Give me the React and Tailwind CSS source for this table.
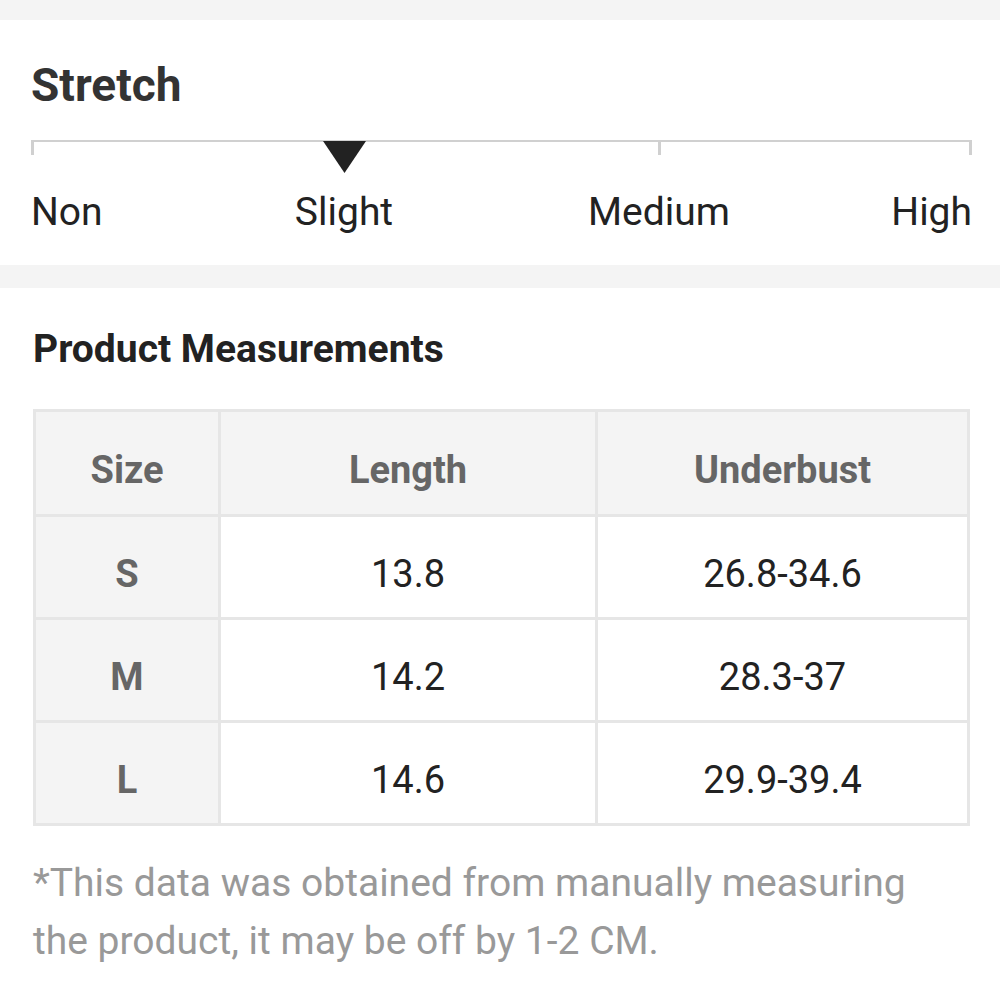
import React from "react";

const rows = [
  { size: "S", length: "13.8", underbust: "26.8-34.6" },
  { size: "M", length: "14.2", underbust: "28.3-37" },
  { size: "L", length: "14.6", underbust: "29.9-39.4" },
];

function StretchScale() {
  return (
    <div className="pl-[31px] pr-[28px]">
      {/* scale line with ticks */}
      <div className="relative h-[46px]">
        <div className="absolute left-0 right-0 top-0 h-[2px] bg-[#d0d0d0]" />
        <div className="absolute left-0 top-0 w-[3px] h-[15px] bg-[#d0d0d0]" />
        <div className="absolute left-[312px] top-0 w-[3px] h-[15px] bg-[#d0d0d0]" />
        <div className="absolute left-[627px] top-0 w-[3px] h-[15px] bg-[#d0d0d0]" />
        <div className="absolute right-0 top-0 w-[3px] h-[15px] bg-[#d0d0d0]" />
        {/* selected marker */}
        <svg
          className="absolute left-[292px] top-[1px]"
          width="43"
          height="32"
          viewBox="0 0 43 32"
        >
          <polygon points="0,0 43,0 21.5,32" fill="#222" />
        </svg>
      </div>
      <div className="relative h-[52px] text-[39px] leading-[52px] text-[#222]">
        <span className="absolute left-0 top-0">Non</span>
        <span className="absolute left-[313px] top-0 -translate-x-1/2">Slight</span>
        <span className="absolute left-[628px] top-0 -translate-x-1/2">Medium</span>
        <span className="absolute right-0 top-0">High</span>
      </div>
    </div>
  );
}

export default function App() {
  return (
    <div
      className="w-[1000px] h-[1000px] bg-[#f4f4f4] overflow-hidden"
      style={{ fontFamily: "Roboto, 'Noto Sans', sans-serif" }}
    >
      <div className="h-[20px]" />

      {/* Stretch */}
      <div className="bg-white h-[245px] pt-[39px]">
        <h2 className="px-[31px] text-[46px] leading-[52px] font-bold text-[#333]">
          Stretch
        </h2>
        <div className="mt-[29px]">
          <StretchScale />
        </div>
      </div>

      <div className="h-[23px]" />

      {/* Measurements */}
      <div className="bg-white h-[712px] px-[33px] pt-[38px]">
        <h3 className="text-[39px] leading-[46px] font-bold text-[#222]">
          Product Measurements
        </h3>

        <table className="mt-[37px] w-[937px] border-collapse border-[3px] border-[#e6e6e6] text-[38px]">
          <thead>
            <tr className="h-[105px] bg-[#f4f4f4]">
              <th className="w-[185px] pt-[14px] border-[3px] border-[#e6e6e6] font-bold text-[#666]">Size</th>
              <th className="w-[377px] pt-[14px] border-[3px] border-[#e6e6e6] font-bold text-[#666]">Length</th>
              <th className="pt-[14px] border-[3px] border-[#e6e6e6] font-bold text-[#666]">Underbust</th>
            </tr>
          </thead>
          <tbody>
            {rows.map((r) => (
              <tr key={r.size} className="h-[103px]">
                <td className="bg-[#f4f4f4] pt-[14px] border-[3px] border-[#e6e6e6] text-center font-bold text-[#666]">
                  {r.size}
                </td>
                <td className="pt-[14px] border-[3px] border-[#e6e6e6] text-center text-[#222]">{r.length}</td>
                <td className="pt-[14px] border-[3px] border-[#e6e6e6] text-center text-[#222]">{r.underbust}</td>
              </tr>
            ))}
          </tbody>
        </table>

        <p className="mt-[28px] text-[39px] leading-[58px] text-[#999] w-[900px]">
          *This data was obtained from manually measuring the product, it may be off by 1-2 CM.
        </p>
      </div>
    </div>
  );
}
